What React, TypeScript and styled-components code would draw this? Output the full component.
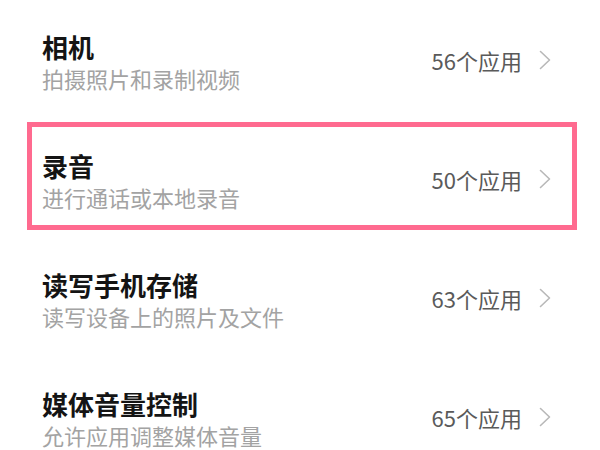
import React, { FC } from 'react';
import styled, { createGlobalStyle } from 'styled-components';

type TPermission = {
  title: string;
  desc: string;
  count: number;
  highlight?: boolean;
};

const permissions: TPermission[] = [
  { title: '相机', desc: '拍摄照片和录制视频', count: 56 },
  { title: '录音', desc: '进行通话或本地录音', count: 50, highlight: true },
  { title: '读写手机存储', desc: '读写设备上的照片及文件', count: 63 },
  { title: '媒体音量控制', desc: '允许应用调整媒体音量', count: 65 },
];

const Chevron: FC = () => (
  <svg width="12" height="20" viewBox="0 0 12 20" fill="none">
    <path d="M1.5 1.5 L10.5 10 L1.5 18.5" stroke="#b8b8b8" strokeWidth="1.6" strokeLinecap="round" strokeLinejoin="round" />
  </svg>
);

const App: FC = () => {
  return (
    <>
      <GlobalStyle />
      <List>
        {permissions.map(p => (
          <Row key={p.title} $highlight={p.highlight}>
            <Texts>
              <Title>{p.title}</Title>
              <Desc>{p.desc}</Desc>
            </Texts>
            <Side>
              <Count>{p.count}个应用</Count>
              <Chevron />
            </Side>
          </Row>
        ))}
      </List>
    </>
  );
};

const GlobalStyle = createGlobalStyle`
  html, body {
    margin: 0;
    padding: 0;
    background: #ffffff;
    font-family: 'Noto Sans CJK SC', 'Noto Sans', sans-serif;
  }
`;

const List = styled.div`
  width: 600px;
  height: 450px;
  overflow: hidden;
  box-sizing: border-box;
  padding: 1px 49px 0 42px;
  display: flex;
  flex-direction: column;
`;

const Row = styled.div<{ $highlight?: boolean }>`
  position: relative;
  height: 119px;
  flex-shrink: 0;
  display: flex;
  align-items: center;
  justify-content: space-between;
  ${props => props.$highlight && `
    &::before {
      content: '';
      position: absolute;
      top: 2px;
      bottom: 9px;
      left: -15px;
      right: -26px;
      border: 5px solid #ff6a8f;
      pointer-events: none;
    }
  `}
`;

const Texts = styled.div`
  display: flex;
  flex-direction: column;
`;

const Title = styled.div`
  font-size: 26px;
  font-weight: 700;
  line-height: 34px;
  color: #141414;
`;

const Desc = styled.div`
  font-size: 22px;
  font-weight: 400;
  line-height: 28px;
  color: #a3a3a3;
`;

const Side = styled.div`
  display: flex;
  align-items: center;
  gap: 17px;
  margin-top: -2px;
`;

const Count = styled.span`
  font-size: 22px;
  color: #5a5a5a;
  line-height: 28px;
`;

export default App;
